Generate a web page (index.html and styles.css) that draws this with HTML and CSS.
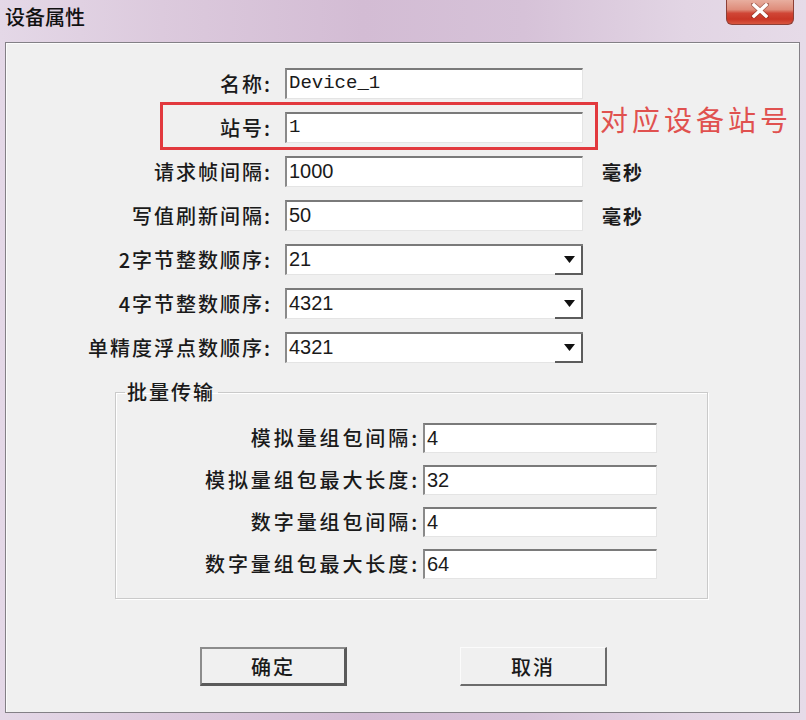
FILE: index.html
```html
<!DOCTYPE html>
<html lang="zh-CN">
<head>
<meta charset="utf-8">
<title>设备属性</title>
<link rel="stylesheet" href="styles.css">
</head>
<body>
<div class="window">
  <div class="titlebar">
    <span class="title">设备属性</span>
    <div class="close">
      <svg width="18" height="15" viewBox="0 0 18 15"><path d="M2.5 1.5 L15.5 13.5 M15.5 1.5 L2.5 13.5" stroke="#6a2418" stroke-width="5" stroke-linecap="square" opacity="0.45"/><path d="M3 2 L15 13 M15 2 L3 13" stroke="#ffffff" stroke-width="3.4" stroke-linecap="square"/></svg>
    </div>
  </div>
  <div class="client">
    <div class="form">
      <label class="lbl">名称:</label>
      <div class="field mono">Device_1</div>
      <span></span>

      <label class="lbl">站号:</label>
      <div class="field mono">1</div>
      <span></span>

      <label class="lbl">请求帧间隔:</label>
      <div class="field">1000</div>
      <span class="unit">毫秒</span>

      <label class="lbl">写值刷新间隔:</label>
      <div class="field">50</div>
      <span class="unit">毫秒</span>

      <label class="lbl">2字节整数顺序:</label>
      <div class="field combo"><span class="val">21</span><span class="drop"><svg width="11" height="7" viewBox="0 0 11 7"><polygon points="0,0 11,0 5.5,7" fill="#111"/></svg></span></div>
      <span></span>

      <label class="lbl">4字节整数顺序:</label>
      <div class="field combo"><span class="val">4321</span><span class="drop"><svg width="11" height="7" viewBox="0 0 11 7"><polygon points="0,0 11,0 5.5,7" fill="#111"/></svg></span></div>
      <span></span>

      <label class="lbl">单精度浮点数顺序:</label>
      <div class="field combo"><span class="val">4321</span><span class="drop"><svg width="11" height="7" viewBox="0 0 11 7"><polygon points="0,0 11,0 5.5,7" fill="#111"/></svg></span></div>
      <span></span>

      <div class="callout"></div>
      <span class="note">对应设备站号</span>
    </div>

    <fieldset class="group">
      <legend>批量传输</legend>
      <div class="group-grid">
        <label class="lbl">模拟量组包间隔:</label>
        <div class="field">4</div>
        <label class="lbl">模拟量组包最大长度:</label>
        <div class="field">32</div>
        <label class="lbl">数字量组包间隔:</label>
        <div class="field">4</div>
        <label class="lbl">数字量组包最大长度:</label>
        <div class="field">64</div>
      </div>
    </fieldset>

    <div class="buttons">
      <div class="btn btn-default">确定</div>
      <div class="btn btn-plain">取消</div>
    </div>
  </div>
</div>
</body>
</html>
```
FILE: styles.css
```css
* { box-sizing: border-box; }
html, body { margin: 0; padding: 0; }
body {
  width: 806px;
  height: 720px;
  overflow: hidden;
  font-family: "Noto Sans CJK SC", "Noto Sans", sans-serif;
  color: #1a1a1a;
}
.window {
  width: 806px;
  height: 720px;
  display: flex;
  flex-direction: column;
  background: linear-gradient(to right, #e4d8e7 0%, #dccadd 20%, #d3bcd4 45%, #d6c2d8 65%, #e2d5e4 85%, #e6dbe8 100%);
}
.titlebar {
  height: 42px;
  flex: none;
  display: flex;
  justify-content: space-between;
  align-items: flex-start;
  padding: 0 12px 0 5px;
}
.title {
  font-size: 20px;
  line-height: 24px;
  margin-top: 5px;
  color: #111;
  font-weight: 500;
}
.close {
  width: 68px;
  height: 25px;
  border: 1px solid #8c3f36;
  border-top: none;
  border-radius: 0 0 6px 6px;
  background: linear-gradient(to bottom, #e8ae9f 0%, #de8c7a 40%, #d04636 55%, #c93626 80%, #d9563f 100%);
  display: flex;
  align-items: center;
  justify-content: center;
  padding-bottom: 3px;
}
.client {
  flex: 1;
  margin: 0 6px 7px 5px;
  border: 1px solid #838086;
  box-shadow: inset 1px 1px 0 #fcfcfc;
  background: #f0f0f0;
}
.form {
  position: relative;
  display: grid;
  grid-template-columns: 266px 298px auto;
  grid-auto-rows: 31px;
  column-gap: 13px;
  row-gap: 13px;
  padding-top: 25px;
}
.lbl {
  font-size: 20px;
  letter-spacing: 2px;
  text-align: right;
  line-height: 31px;
  white-space: nowrap;
  color: #1a1a1a;
  font-weight: 500;
}
.field {
  background: #fff;
  border-top: 2px solid #7a7a7a;
  border-left: 2px solid #8a8a8a;
  border-right: 1px solid #e4e4e4;
  border-bottom: 1px solid #e4e4e4;
  font-family: "Liberation Sans", Arial, sans-serif;
  font-size: 20px;
  line-height: 27px;
  padding-left: 2px;
  color: #1a1a1a;
  white-space: nowrap;
}
.mono {
  font-family: "Liberation Mono", "Courier New", monospace;
  font-size: 19px;
}
.unit {
  font-size: 19px;
  line-height: 31px;
  margin-left: 6px;
  letter-spacing: 2px;
  font-weight: 700;
}
.combo {
  display: flex;
  align-items: stretch;
  border-right: none;
  padding-left: 2px;
}
.combo .val { flex: 1; }
.drop {
  width: 28px;
  margin-bottom: -1px;
  border-right: 2px solid #5c5c5c;
  border-bottom: 2px solid #5c5c5c;
  display: flex;
  align-items: center;
  justify-content: center;
  padding-left: 2px;
}
.callout {
  position: absolute;
  left: 154px;
  top: 59px;
  width: 438px;
  height: 48px;
  border: 3px solid #e2393e;
}
.note {
  position: absolute;
  left: 594px;
  top: 58px;
  font-size: 28px;
  line-height: 36px;
  letter-spacing: 4px;
  color: #e0514f;
  white-space: nowrap;
}
.group {
  margin: 17px 0 0 109px;
  width: 593px;
  padding: 19px 0 19px 0;
  border: 1px solid #cacaca;
  box-shadow: inset 1px 1px 0 #fff, 1px 1px 0 #fff;
}
.group legend {
  margin-left: 9px;
  padding: 0 3px 0 2px;
  font-size: 20px;
  line-height: 24px;
  letter-spacing: 2px;
  color: #1a1a1a;
  font-weight: 500;
}
.group-grid {
  display: grid;
  grid-template-columns: 304px 234px;
  grid-auto-rows: 30px;
  column-gap: 3px;
  row-gap: 12px;
}
.group-grid .lbl { line-height: 30px; letter-spacing: 2.9px; }
.group-grid .field { line-height: 26px; }
.buttons {
  display: flex;
  gap: 113px;
  margin-top: 48px;
  padding-left: 194px;
}
.btn {
  width: 147px;
  height: 39px;
  display: flex;
  align-items: center;
  justify-content: center;
  font-size: 20px;
  letter-spacing: 2px;
  background: #f0f0f0;
  color: #1a1a1a;
  font-weight: 500;
}
.btn-default {
  border-top: 2px solid #8c8c8c;
  border-left: 2px solid #8c8c8c;
  border-right: 3px solid #5a5a5a;
  border-bottom: 3px solid #5a5a5a;
}
.btn-plain {
  border-top: 1px solid #fbfbfb;
  border-left: 1px solid #fbfbfb;
  border-right: 2px solid #6c6c6c;
  border-bottom: 2px solid #6c6c6c;
}
```
